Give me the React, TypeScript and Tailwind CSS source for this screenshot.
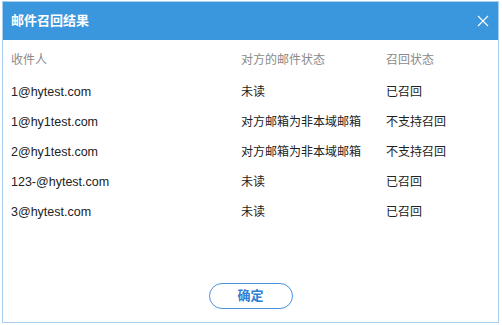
const rows = [
    { email: '1@hytest.com', state: '未读', recall: '已召回' },
    { email: '1@hy1test.com', state: '对方邮箱为非本域邮箱', recall: '不支持召回' },
    { email: '2@hy1test.com', state: '对方邮箱为非本域邮箱', recall: '不支持召回' },
    { email: '123-@hytest.com', state: '未读', recall: '已召回' },
    { email: '3@hytest.com', state: '未读', recall: '已召回' },
];

const font = "font-['Tahoma','Liberation_Sans','Noto_Sans_CJK_SC',sans-serif]";

export default function App() {
    return (
        <div className={`h-[325px] w-[502px] bg-white pl-[2px] pt-[1px] ${font}`}>
            <div className="flex h-[322px] w-[497px] flex-col border border-[#a9cdee] bg-white">
                <div className="flex h-[38px] shrink-0 items-center justify-between bg-[#3a96dd] pl-[8px] pr-[9px]">
                    <span className="text-[13px] font-bold text-white">邮件召回结果</span>
                    <svg width="12" height="12" viewBox="0 0 12 12" className="text-white">
                        <path d="M1 1L11 11M11 1L1 11" stroke="currentColor" strokeWidth="1.1" />
                    </svg>
                </div>

                <div className="pl-[8px] pt-[5px] text-[12px]">
                    <div className="flex h-[30px] items-center text-[#8a8a8a]">
                        <div className="w-[230px]">收件人</div>
                        <div className="w-[145px]">对方的邮件状态</div>
                        <div>召回状态</div>
                    </div>
                    <div className="mt-[2px]">
                        {rows.map((r, i) => (
                            <div key={i} className="flex h-[30px] items-center text-[#222]">
                                <div className="w-[230px] text-[12.5px]">{r.email}</div>
                                <div className="w-[145px]">{r.state}</div>
                                <div>{r.recall}</div>
                            </div>
                        ))}
                    </div>
                </div>

                <div className="flex flex-1 items-end justify-center pb-[13px]">
                    <button className="flex h-[26px] w-[84px] items-center justify-center rounded-full border border-[#4a92d8] text-[13px] font-bold text-[#2f80d1]">
                        确定
                    </button>
                </div>
            </div>
        </div>
    );
}
